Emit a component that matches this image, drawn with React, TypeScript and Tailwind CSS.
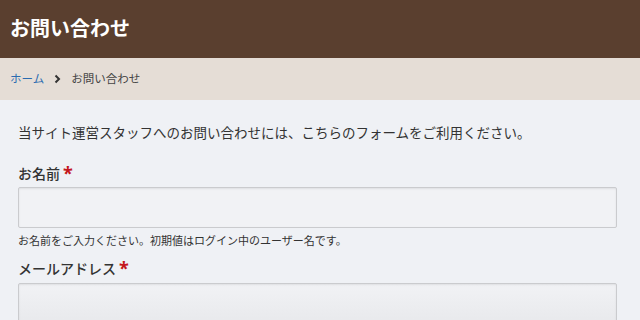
export default function App() {
  return (
    <div
      className="min-h-[320px] w-[640px] overflow-hidden bg-[#eff1f5] text-[#333]"
      style={{ fontFamily: '"Noto Sans", "Noto Sans CJK JP", sans-serif' }}
    >
      <header className="flex h-[58px] items-center bg-[#5a3f2f] px-[10px]">
        <h1 className="text-[20px] font-bold leading-none text-white">お問い合わせ</h1>
      </header>

      <nav className="flex h-[42px] items-center gap-[9px] bg-[#e5ddd6] px-[10px] text-[11.5px] leading-none">
        <a href="#" className="text-[#2a6bb0]">ホーム</a>
        <svg width="9" height="10" viewBox="0 0 9 10">
          <path d="M2.5 1.5 L6 5 L2.5 8.5" fill="none" stroke="#333" strokeWidth="2" />
        </svg>
        <span className="text-[#444]">お問い合わせ</span>
      </nav>

      <main className="px-[18px] pt-[24px]">
        <p className="text-[13.5px] leading-[18px] text-[#333]">
          当サイト運営スタッフへのお問い合わせには、こちらのフォームをご利用ください。
        </p>

        <div className="mt-[22px]">
          <label className="flex items-start text-[14px] font-medium leading-[20px] text-[#333]">
            お名前
            <span className="ml-[3px] text-[18px] font-bold leading-[18px] text-[#c4161c]">*</span>
          </label>
          <input
            type="text"
            className="mt-[3px] block h-[41px] w-[599px] rounded-[2px] border border-[#cacbce] bg-[#f1f2f5] shadow-[inset_0_1px_2px_rgba(0,0,0,0.08)]"
          />
          <p className="mt-[5px] text-[11px] leading-[16px] text-[#333]">
            お名前をご入力ください。初期値はログイン中のユーザー名です。
          </p>
        </div>

        <div className="mt-[10px]">
          <label className="flex items-start text-[14px] font-medium leading-[20px] text-[#333]">
            メールアドレス
            <span className="ml-[3px] text-[18px] font-bold leading-[18px] text-[#c4161c]">*</span>
          </label>
          <input
            type="email"
            className="mt-[4px] block h-[41px] w-[599px] rounded-[2px] border border-[#cacbce] bg-[linear-gradient(#f1f2f5,#e8e9ec)] shadow-[inset_0_1px_2px_rgba(0,0,0,0.08)]"
          />
        </div>
      </main>
    </div>
  );
}
